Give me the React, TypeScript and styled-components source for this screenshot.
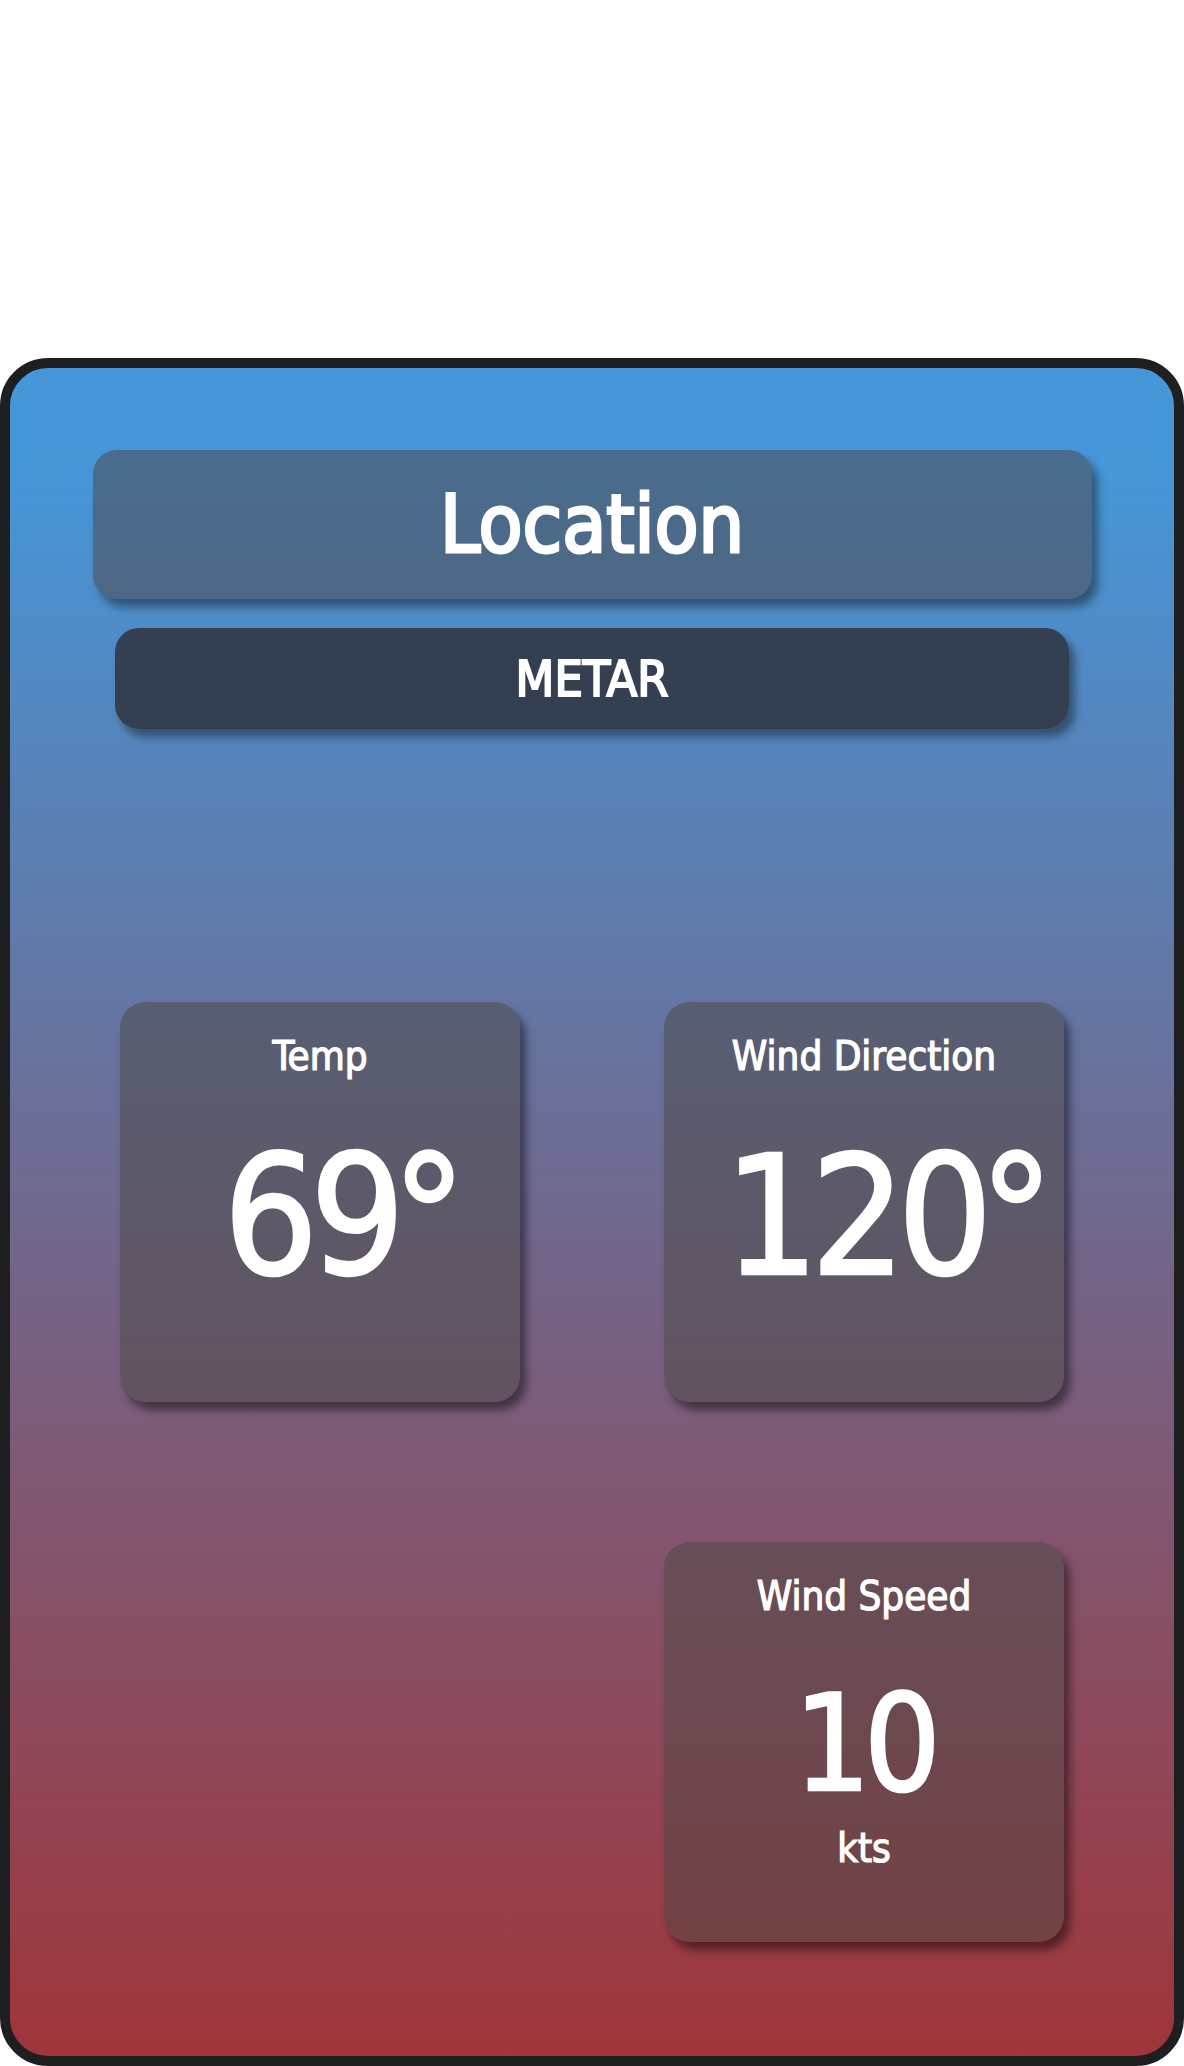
import React from "react";
import styled, { createGlobalStyle } from "styled-components";

const GlobalStyle = createGlobalStyle`
  html, body {
    margin: 0;
    padding: 0;
    background: #ffffff;
  }
  body {
    font-family: "DejaVu Sans Condensed", "DejaVu Sans", sans-serif;
    font-stretch: condensed;
    color: #ffffff;
  }
  * { box-sizing: border-box; }
`;

const Page = styled.div`
  padding-top: 358px;
  width: 1184px;
`;

const Frame = styled.main`
  width: 1184px;
  border: 10px solid #1d1f20;
  border-radius: 48px;
  overflow: hidden;
  background: linear-gradient(180deg, #4597d9 5%, #a0353a 100%);
  padding: 82px 0 114px;
  display: flex;
  flex-direction: column;
  align-items: center;
`;

const Header = styled.div<{ $w: number; $h: number; $bg: string; $size: number; $stroke: number }>`
  width: ${(p) => p.$w}px;
  height: ${(p) => p.$h}px;
  background: ${(p) => p.$bg};
  border-radius: 24px;
  box-shadow: 6px 8px 8px rgba(0, 0, 0, 0.4);
  display: flex;
  align-items: center;
  justify-content: center;
  font-size: ${(p) => p.$size}px;
  line-height: 1;
  -webkit-text-stroke: ${(p) => p.$stroke}px #ffffff;
`;

const Grid = styled.section`
  margin-top: 273px;
  display: grid;
  grid-template-columns: 400px 400px;
  grid-auto-rows: 400px;
  column-gap: 144px;
  row-gap: 140px;
  justify-content: center;
`;

const Card = styled.div<{ $col?: number }>`
  grid-column: ${(p) => p.$col ?? "auto"};
  background: rgba(75, 71, 68, 0.5);
  border-radius: 26px;
  box-shadow: 6px 8px 8px rgba(0, 0, 0, 0.45);
  padding-top: 34px;
  display: flex;
  flex-direction: column;
  align-items: center;
`;

const Label = styled.div`
  font-size: 40px;
  line-height: 40px;
  -webkit-text-stroke: 1.2px #ffffff;
`;

const Value = styled.div<{ $size: number; $gap: number }>`
  margin-top: ${(p) => p.$gap}px;
  font-size: ${(p) => p.$size}px;
  line-height: 1;
  letter-spacing: -0.05em;
  -webkit-text-stroke: 2.5px #ffffff;
  white-space: nowrap;
`;

const Degree = styled.span`
  margin-left: -0.03em;
  margin-right: -0.3em;
  letter-spacing: 0;
`;

const Unit = styled.div`
  margin-top: 17px;
  font-size: 40px;
  line-height: 1;
  -webkit-text-stroke: 1.2px #ffffff;
`;

export default function App() {
  return (
    <Page>
      <GlobalStyle />
      <Frame>
        <Header $w={999} $h={149} $bg="rgba(78, 66, 66, 0.5)" $size={80} $stroke={3}>
          Location
        </Header>
        <Header
          $w={954}
          $h={101}
          $bg="rgba(44, 44, 50, 0.78)"
          $size={50}
          $stroke={2}
          style={{ marginTop: 29 }}
        >
          METAR
        </Header>
        <Grid>
          <Card>
            <Label>Temp</Label>
            <Value $size={166} $gap={58}>
              69<Degree>°</Degree>
            </Value>
          </Card>
          <Card>
            <Label>Wind Direction</Label>
            <Value $size={166} $gap={58}>
              120<Degree>°</Degree>
            </Value>
          </Card>
          <Card $col={2}>
            <Label>Wind Speed</Label>
            <Value $size={134} $gap={61}>
              10
            </Value>
            <Unit>kts</Unit>
          </Card>
        </Grid>
      </Frame>
    </Page>
  );
}
